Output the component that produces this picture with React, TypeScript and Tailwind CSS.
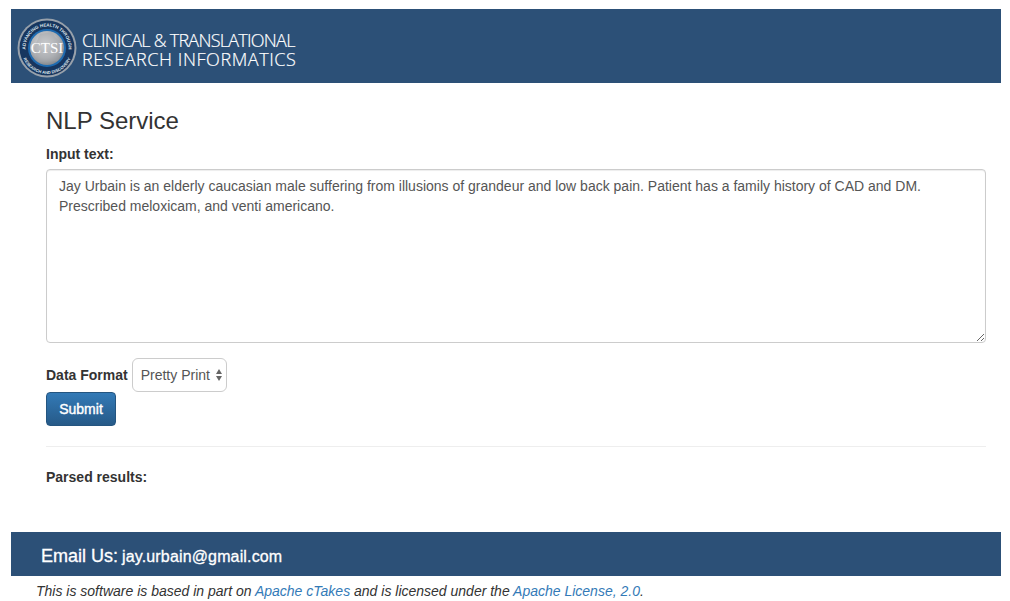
import React from 'react';

// CTSI seal, drawn small like the raster logo in the banner
function CtsiSeal() {
  return (
    <svg width="60" height="60" viewBox="0 0 60 60" className="mt-[3px] shrink-0">
      <defs>
        <radialGradient id="silver" cx="45%" cy="40%" r="65%">
          <stop offset="0%" stopColor="#e4e5e6" />
          <stop offset="60%" stopColor="#b4b6b9" />
          <stop offset="100%" stopColor="#7d8186" />
        </radialGradient>
        <path id="sealTop" d="M9.8 37.35 A21.5 21.5 0 1 1 50.2 37.35" />
        <path id="sealBottom" d="M4.4 34.5 A26 26 0 0 0 55.6 34.5" />
      </defs>
      <circle cx="30" cy="30" r="29.5" fill="#98a1ab" />
      <circle cx="30" cy="30" r="27.5" fill="#17365f" />
      <circle cx="30" cy="30" r="19" fill="#1f6bb0" />
      <circle cx="30" cy="30" r="17" fill="url(#silver)" />
      <path d="M23 16 L35 14 L38 19 L44 24 L45 34 L41 43 L21 44 L17 30 Z" fill="#a3a6aa" opacity="0.4" />
      <text fontFamily="'Liberation Sans', sans-serif" fontSize="4.5" fontWeight="700" fill="#dfe6ee">
        <textPath href="#sealTop" startOffset="50%" textAnchor="middle">ADVANCING HEALTH THROUGH</textPath>
      </text>
      <text fontFamily="'Liberation Sans', sans-serif" fontSize="4.2" fontWeight="700" fill="#dfe6ee">
        <textPath href="#sealBottom" startOffset="50%" textAnchor="middle">RESEARCH AND DISCOVERY</textPath>
      </text>
      <text x="30" y="35" textAnchor="middle" fontFamily="'Liberation Serif', serif" fontSize="15" fill="#ffffff">CTSI</text>
    </svg>
  );
}

export default function App() {
  return (
    <div className="h-[601px] overflow-hidden bg-white pt-[9px] font-['Liberation_Sans',Arial,sans-serif] text-[14px] leading-5 text-[#333]">
      {/* Banner */}
      <header className="mr-[9px] ml-[11px] flex h-[74px] items-center bg-[#2c5077] pl-[6px]">
        <CtsiSeal />
        <div className="mt-[7px] ml-[5px] font-['Open_Sans','Liberation_Sans',sans-serif] text-[18px] leading-[19px] font-light text-white [-webkit-text-stroke:0.2px_#fff]">
          <div className="tracking-[-0.74px]">CLINICAL &amp; TRANSLATIONAL</div>
          <div className="tracking-[0.57px]">RESEARCH INFORMATICS</div>
        </div>
      </header>

      {/* Form */}
      <main className="mr-[24px] ml-[46px]">
        <h3 className="mt-[21px] text-[24px] leading-[34px] font-medium">NLP Service</h3>
        <label htmlFor="input-text" className="mt-[6px] block leading-5 font-bold">Input text:</label>
        <textarea
          id="input-text"
          className="mt-[5px] block h-[174px] w-full rounded border border-[#ccc] px-3 py-1.5 text-[#555] shadow-[inset_0_1px_1px_rgba(0,0,0,0.075)] outline-none"
          defaultValue="Jay Urbain is an elderly caucasian male suffering from illusions of grandeur and low back pain. Patient has a family history of CAD and DM. Prescribed meloxicam, and venti americano."
        />
        <div className="mt-[15px] flex items-center">
          <label htmlFor="data-format" className="font-bold">Data Format</label>
          <div className="relative ml-1">
            <select
              id="data-format"
              className="block h-[34px] w-[95px] appearance-none rounded-md border border-[#ccc] bg-white pl-2 text-[#555] outline-none"
            >
              <option>Pretty Print</option>
            </select>
            {/* up/down arrows of the select */}
            <svg width="6" height="12" viewBox="0 0 6 12" className="pointer-events-none absolute top-[11px] right-[5px]">
              <path d="M3 0 L6 5 H0 Z M0 7 H6 L3 12 Z" fill="#666" />
            </svg>
          </div>
        </div>
        <button className="block h-[34px] w-[70px] rounded border border-[#245580] bg-gradient-to-b from-[#337ab7] to-[#265a88] text-white [-webkit-text-stroke:0.4px_#fff]">
          Submit
        </button>
        <hr className="mt-5 border-t border-[#eee]" />
        <p className="mt-[20px] font-bold">Parsed results:</p>
      </main>

      {/* Footer */}
      <div className="mr-[9px] ml-[11px] mt-[45px] flex h-[44px] items-baseline gap-[4px] bg-[#2c5077] pt-[14px] pl-[30px] text-white [-webkit-text-stroke:0.3px_#fff]">
        <span className="text-[18px]">Email Us:</span>
        <span className="text-[16px] tracking-[0.15px]">jay.urbain@gmail.com</span>
      </div>
      <p className="mt-[5px] ml-[36px] italic">
        This is software is based in part on <a href="#" className="text-[#337ab7]">Apache cTakes</a> and is licensed under the <a href="#" className="text-[#337ab7]">Apache License, 2.0</a>.
      </p>
    </div>
  );
}
